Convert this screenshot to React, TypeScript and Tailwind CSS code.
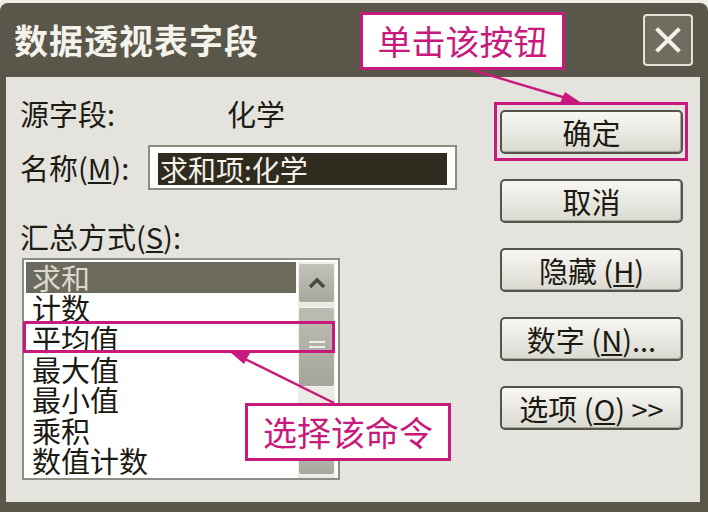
import React from 'react';

const magenta = '#c8197c';

function DlgButton({ children }: { children: React.ReactNode }) {
  return (
    <div className="h-[44px] w-[183px] flex items-center justify-center rounded-[5px] border-2 border-[#55534a] bg-gradient-to-b from-[#f8f7f3] to-[#dad9d1] shadow-[inset_-1px_-1px_0_#a9a89e] text-[29px] leading-none text-[#1b1a12] whitespace-pre">
      {children}
    </div>
  );
}

export default function App() {
  const items = ['求和', '计数', '平均值', '最大值', '最小值', '乘积', '数值计数'];

  return (
    <div className="relative w-[708px] h-[512px] overflow-hidden bg-[#eeede6] font-['Noto_Sans_CJK_SC',sans-serif]">
      <div className="mt-[3px] h-[509px] rounded-t-[8px] bg-[#58574a] flex flex-col">
        {/* title bar */}
        <div className="h-[74px] flex items-center justify-between pl-[14px] pr-[15px]">
          <div className="text-[34px] font-bold leading-none tracking-[1px] text-[#f4f2ea]">数据透视表字段</div>
          <div className="w-[50px] h-[52px] rounded-[4px] border-2 border-[#e4e2d8] bg-[#6f6d60] flex items-center justify-center">
            <svg width="30" height="30" viewBox="0 0 30 30">
              <path d="M5 5 L25 25 M25 5 L5 25" stroke="#f2f0e8" strokeWidth="4" strokeLinecap="square" />
            </svg>
          </div>
        </div>

        {/* body */}
        <div className="ml-[6px] mr-[8px] h-[425px] bg-[#e4e3de] flex">
          <div className="w-[494px] pl-[14px] pt-[20px] flex flex-col text-[29px] leading-none text-[#1d1c14]">
            <div className="h-[32px] flex items-center">
              <span className="w-[207px]">源字段:</span>
              <span>化学</span>
            </div>
            <div className="mt-[16px] flex items-center">
              <span className="w-[128px] whitespace-pre">名称(<span className="underline">M</span>):</span>
              <div className="w-[309px] h-[45px] border-2 border-[#8d8c84] bg-white px-[8px] pt-[6px] pb-[3px]">
                <div className="h-[32px] bg-[#2f2b1e] text-[#f4f2ea] text-[28px] pl-[2px] flex items-center">求和项:化学</div>
              </div>
            </div>
            <div className="mt-[30px] h-[32px] flex items-center">
              汇总方式(<span className="underline">S</span>):
            </div>
            <div className="mt-[6px] ml-[2px] w-[318px] h-[222px] border-2 border-[#8f8e86] bg-white flex pl-[2px] pt-[2px] overflow-hidden">
              <div className="w-[270px] flex flex-col">
                {items.map((it, i) => (
                  <div
                    key={it}
                    className={
                      i === 0
                        ? 'h-[30.6px] shrink-0 pl-[6px] flex items-center text-[29px] leading-none bg-[#6b6a5d] text-[#dcdad0]'
                        : 'h-[30.6px] shrink-0 pl-[6px] flex items-center text-[29px] leading-none text-[#1b1a12]'
                    }
                  >
                    {it}
                  </div>
                ))}
              </div>
              <div className="ml-[2px] w-[37px] flex flex-col bg-[#ebeae4] pt-[1px]">
                <div className="h-[40px] rounded-[3px] border border-[#f2f1ec] bg-gradient-to-b from-[#c4c3ba] to-[#a8a79d] flex items-center justify-center">
                  <svg width="18" height="12" viewBox="0 0 18 12">
                    <path d="M2 10 L9 3 L16 10" stroke="#4a493e" strokeWidth="3.5" fill="none" />
                  </svg>
                </div>
                <div className="mt-[4px] h-[80px] rounded-[3px] border border-[#f2f1ec] bg-gradient-to-b from-[#bdbcb3] to-[#a6a59b] flex flex-col items-center justify-center gap-[3px]">
                  <div className="w-[16px] h-[2px] bg-[#eeede6]" />
                  <div className="w-[16px] h-[2px] bg-[#eeede6]" />
                  <div className="w-[16px] h-[2px] bg-[#eeede6]" />
                </div>
                <div className="flex-1" />
                <div className="mb-[3px] h-[36px] rounded-[3px] border border-[#f2f1ec] bg-gradient-to-b from-[#c4c3ba] to-[#a8a79d]" />
              </div>
            </div>
          </div>

          <div className="pt-[33px] flex flex-col gap-[25px]">
            <DlgButton>确定</DlgButton>
            <DlgButton>取消</DlgButton>
            <DlgButton>隐藏 (<span className="underline">H</span>)</DlgButton>
            <DlgButton>数字 (<span className="underline">N</span>)...</DlgButton>
            <DlgButton>选项 (<span className="underline">O</span>) &gt;&gt;</DlgButton>
          </div>
        </div>
      </div>

      {/* annotations */}
      <div className="absolute left-[360px] top-[12px] w-[205px] h-[58px] border-[3px] border-[#c8197c] bg-white flex items-center justify-center text-[34px] leading-none text-[#c8197c]">
        单击该按钮
      </div>
      <div className="absolute left-[494px] top-[102px] w-[194px] h-[59px] border-[3px] border-[#c8197c]" />
      <div className="absolute left-[23px] top-[321px] w-[312px] h-[32px] border-[3px] border-[#c8197c]" />
      <div className="absolute left-[245px] top-[403px] w-[206px] h-[58px] border-[3px] border-[#c8197c] bg-white flex items-center justify-center text-[34px] leading-none text-[#c8197c]">
        选择该命令
      </div>
      <svg className="absolute left-0 top-0" width="708" height="512" viewBox="0 0 708 512">
        <line x1="472" y1="70" x2="566" y2="98" stroke={magenta} strokeWidth="2.5" />
        <path d="M580 102 L560 103 L565 92 Z" fill={magenta} />
        <line x1="334" y1="403" x2="243" y2="358" stroke={magenta} strokeWidth="2.5" />
        <path d="M230 352 L250 353 L244 364 Z" fill={magenta} />
      </svg>
    </div>
  );
}
